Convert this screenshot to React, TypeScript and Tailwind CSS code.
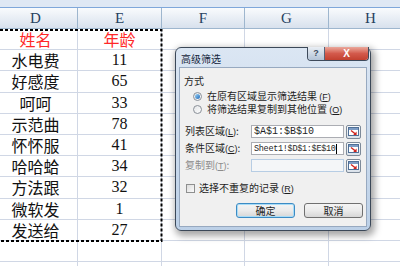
import React from 'react';

const cjk = "font-['Noto_Sans_CJK_SC',sans-serif]";
const serif = "font-['Liberation_Serif','Noto_Sans_CJK_SC',serif]";

const COLS = [
  { key: 'D', w: 'w-[84px]' },
  { key: 'E', w: 'w-[84px]' },
  { key: 'F', w: 'w-[83px]' },
  { key: 'G', w: 'w-[84px]' },
  { key: 'H', w: 'w-[84px]' },
];

const ROWS: [string, string][] = [
  ['姓名', '年龄'],
  ['水电费', '11'],
  ['好感度', '65'],
  ['呵呵', '33'],
  ['示范曲', '78'],
  ['怀怀服', '41'],
  ['哈哈蛤', '34'],
  ['方法跟', '32'],
  ['微软发', '1'],
  ['发送给', '27'],
  ['', ''],
  ['', ''],
];

function RefButton() {
  return (
    <div className="w-[15px] h-[14px] shrink-0 flex items-center justify-center rounded-[2px] border border-[#7d8a99] bg-gradient-to-b from-[#fbfcfd] to-[#d9e1ea]">
      <svg width="11" height="9" viewBox="0 0 11 9">
        <rect x="0.5" y="0.5" width="10" height="8" fill="#fff" stroke="#4f6f96" />
        <rect x="1" y="1" width="9" height="2" fill="#7d9cc4" />
        <path d="M3 3.5 L7.5 7" stroke="#d0231d" strokeWidth="1.4" fill="none" />
        <path d="M8.6 8 L8.6 4.6 L5.2 8 Z" fill="#d0231d" />
      </svg>
    </div>
  );
}

function Mn({ c }: { c: string }) {
  return (
    <span className="font-['Liberation_Sans',sans-serif] text-[9px]">
      (<span className="underline">{c}</span>)
    </span>
  );
}

function Radio({ checked }: { checked?: boolean }) {
  return (
    <div className="w-[9px] h-[9px] shrink-0 rounded-full border border-[#8a9098] bg-gradient-to-br from-[#e4e6e8] to-[#fcfcfc] flex items-center justify-center">
      {checked && <div className="w-[5px] h-[5px] rounded-full bg-gradient-to-br from-[#9ad2f5] to-[#1b6ab8]" />}
    </div>
  );
}

function Dialog() {
  return (
    <div className={`absolute left-[175px] top-[47px] w-[196px] h-[184px] rounded-[6px] border border-[#3b4858] bg-gradient-to-b from-[#dbe6f3] to-[#bcd0e7] shadow-[2px_3px_7px_2px_rgba(0,0,0,0.35)] flex flex-col ${cjk}`}>
      <div className="h-[19px] flex items-start">
        <div className="pl-[5px] pt-[5px] text-[10px] leading-[12px] text-[#15263c]">高级筛选</div>
        <div className="ml-auto mr-[1px] -mt-[1px] flex border border-t-0 border-[#3d4a5b] rounded-b-[4px] overflow-hidden h-[14px]">
          <div className="w-[17px] flex items-center justify-center bg-gradient-to-b from-[#e9eef4] to-[#b3c3d6] border-r border-[#56647a] text-[9px] leading-none text-[#3b4a5e] font-['Liberation_Sans',sans-serif] font-bold">?</div>
          <div className="w-[43px] flex items-center justify-center bg-gradient-to-b from-[#eaa89c] via-[#d35a4c] to-[#c2402f] text-[10px] leading-none text-white font-['Liberation_Sans',sans-serif] font-bold">X</div>
        </div>
      </div>
      <div className="mx-[3px] h-[160px] bg-[#f0f0f0] border border-[#97a9c0] flex flex-col text-[10px] leading-[12px] text-[#1e1e1e]">
        <div className="mt-[6px] h-[14px] pl-[4px] flex items-center">方式</div>
        <div className="mt-[2px] h-[13px] pl-[13px] flex items-center gap-[5px]">
          <Radio checked />
          <span>在原有区域显示筛选结果 <Mn c="F" /></span>
        </div>
        <div className="h-[13px] pl-[13px] flex items-center gap-[5px]">
          <Radio />
          <span>将筛选结果复制到其他位置 <Mn c="O" /></span>
        </div>
        <div className="mt-[7px] h-[17px] pl-[5px] flex items-center">
          <span className="w-[66px]">列表区域<Mn c="L" />:</span>
          <div className="w-[93px] h-[13px] bg-white border border-[#abadb3] flex items-center pl-[2px] font-['Liberation_Mono',monospace] text-[10px]">$A$1:$B$10</div>
          <div className="ml-[2px]"><RefButton /></div>
        </div>
        <div className="h-[17px] pl-[5px] flex items-center">
          <span className="w-[66px]">条件区域<Mn c="C" />:</span>
          <div className="w-[93px] h-[13px] bg-white border border-[#abadb3] flex items-center pl-[2px] font-['Liberation_Mono',monospace] text-[8.5px] tracking-[-0.3px] overflow-hidden whitespace-nowrap">
            Sheet1!$D$1:$E$10<span className="inline-block w-px h-[10px] bg-black" />
          </div>
          <div className="ml-[2px]"><RefButton /></div>
        </div>
        <div className="h-[17px] pl-[5px] flex items-center text-[#8c8c8c]">
          <span className="w-[66px]">复制到<Mn c="T" />:</span>
          <div className="w-[93px] h-[13px] bg-[#f4f6f8] border border-[#b7cde4]" />
          <div className="ml-[2px]"><RefButton /></div>
        </div>
        <div className="mt-[6px] h-[16px] pl-[6px] flex items-center gap-[4px]">
          <div className="w-[9px] h-[9px] border border-[#8e8f8f] bg-gradient-to-br from-[#dcdcdc] to-[#fbfbfb]" />
          <span>选择不重复的记录 <Mn c="R" /></span>
        </div>
        <div className="mt-[7px] h-[15px] pr-[3px] flex justify-end gap-[9px]">
          <div className="w-[59px] h-full rounded-[3px] border border-[#3c8bc4] bg-gradient-to-b from-[#f4f4f4] via-[#ebebeb] to-[#d7d7d7] shadow-[inset_0_0_0_1px_#a8dcf7] flex items-center justify-center">确定</div>
          <div className="w-[59px] h-full rounded-[3px] border border-[#707070] bg-gradient-to-b from-[#f4f4f4] via-[#ebebeb] to-[#d7d7d7] flex items-center justify-center">取消</div>
        </div>
      </div>
    </div>
  );
}

export default function App() {
  return (
    <div className="relative w-[400px] h-[266px] overflow-hidden bg-white">
      <div className="h-[7px] bg-[#dfe8f4]" />
      <div className="h-px bg-[#7fa7da]" />
      <div className="flex h-[21px] -ml-[6px] bg-gradient-to-b from-[#f9fbfd] to-[#d8e1ed] border-b border-[#9eb6ce]">
        {COLS.map(c => (
          <div key={c.key} className={`${c.w} shrink-0 flex items-center justify-center border-r border-[#9eb6ce] text-[15px] text-[#27415f] ${serif}`}>
            {c.key}
          </div>
        ))}
      </div>
      {ROWS.map((r, i) => (
        <div key={i} className="flex h-[21.2px] -ml-[6px]">
          {COLS.map((c, j) => (
            <div
              key={c.key}
              className={`${c.w} shrink-0 flex items-center justify-center border-r border-b border-[#d0d7e5] text-[16px] leading-[16px] ${i === 0 ? 'text-[#ff2828]' : 'text-[#111]'} ${j === 1 && i > 0 ? serif : cjk}`}
            >
              {j === 0 ? r[0] : j === 1 ? r[1] : ''}
            </div>
          ))}
        </div>
      ))}
      <svg className="absolute left-0 top-0" width="400" height="266">
        <rect x="-10" y="30" width="171.5" height="211" fill="none" stroke="#000" strokeWidth="2" strokeDasharray="3 2" />
      </svg>
      <Dialog />
    </div>
  );
}
